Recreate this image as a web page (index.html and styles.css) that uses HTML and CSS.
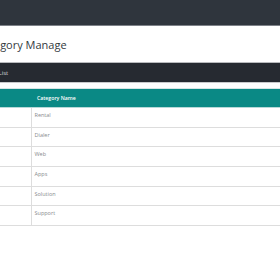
FILE: index.html
```html
<!DOCTYPE html>
<html>
<head>
<meta charset="utf-8">
<link rel="stylesheet" href="styles.css">
</head>
<body>
<div class="page">
  <nav class="topbar"></nav>
  <header class="page-head"><h1>Category Manage</h1></header>
  <div class="panel-head"><span>Category List</span></div>
  <div class="gap"></div>
  <table class="grid">
    <thead>
      <tr><th class="num">#</th><th>Category Name</th></tr>
    </thead>
    <tbody>
      <tr><td class="num"></td><td>Rental</td></tr>
      <tr><td class="num"></td><td>Dialer</td></tr>
      <tr><td class="num"></td><td>Web</td></tr>
      <tr><td class="num"></td><td>Apps</td></tr>
      <tr><td class="num"></td><td>Solution</td></tr>
      <tr><td class="num"></td><td>Support</td></tr>
    </tbody>
  </table>
</div>
</body>
</html>
```
FILE: styles.css
```css
html, body {
  margin: 0;
  padding: 0;
  background: #ffffff;
  overflow: hidden;
  font-family: "Open Sans", "Liberation Sans", sans-serif;
}
.page {
  width: 280px;
  height: 280px;
  overflow: hidden;
}
.topbar {
  height: 25px;
  background: #2f353d;
  border-bottom: 1px solid #7d8188;
}
.page-head {
  height: 36px;
  display: flex;
  align-items: center;
  border-bottom: 1px solid #b9bbbe;
}
.page-head h1 {
  margin: 0 0 0 -23px;
  font-size: 11px;
  font-weight: 400;
  color: #333a40;
  white-space: nowrap;
}
.panel-head {
  height: 19px;
  background: #262a31;
  display: flex;
  align-items: center;
  border-bottom: 1px solid #c9cacc;
}
.panel-head span {
  margin-left: -28px;
  font-size: 6px;
  color: #d0d3d6;
  white-space: nowrap;
}
.gap {
  height: 5px;
  border-bottom: 1px solid #d7e6e6;
}
.grid {
  width: 100%;
  border-collapse: collapse;
}
.grid th {
  height: 18px;
  padding: 0 0 0 6px;
  background: #0a8985;
  color: #ffffff;
  font-size: 5.2px;
  font-weight: 600;
  text-align: left;
  border-bottom: 1px solid #b7d9d8;
}
.grid th.num {
  width: 31px;
  padding: 0;
  color: transparent;
}
.grid td {
  height: 19.67px;
  box-sizing: border-box;
  padding: 4px 0 0 3px;
  vertical-align: top;
  font-size: 5.5px;
  line-height: 7px;
  color: #888b8e;
  border-bottom: 1px solid #dddddd;
}
.grid td.num {
  width: 31px;
  padding: 0;
  border-right: 1px solid #dddddd;
}
```
